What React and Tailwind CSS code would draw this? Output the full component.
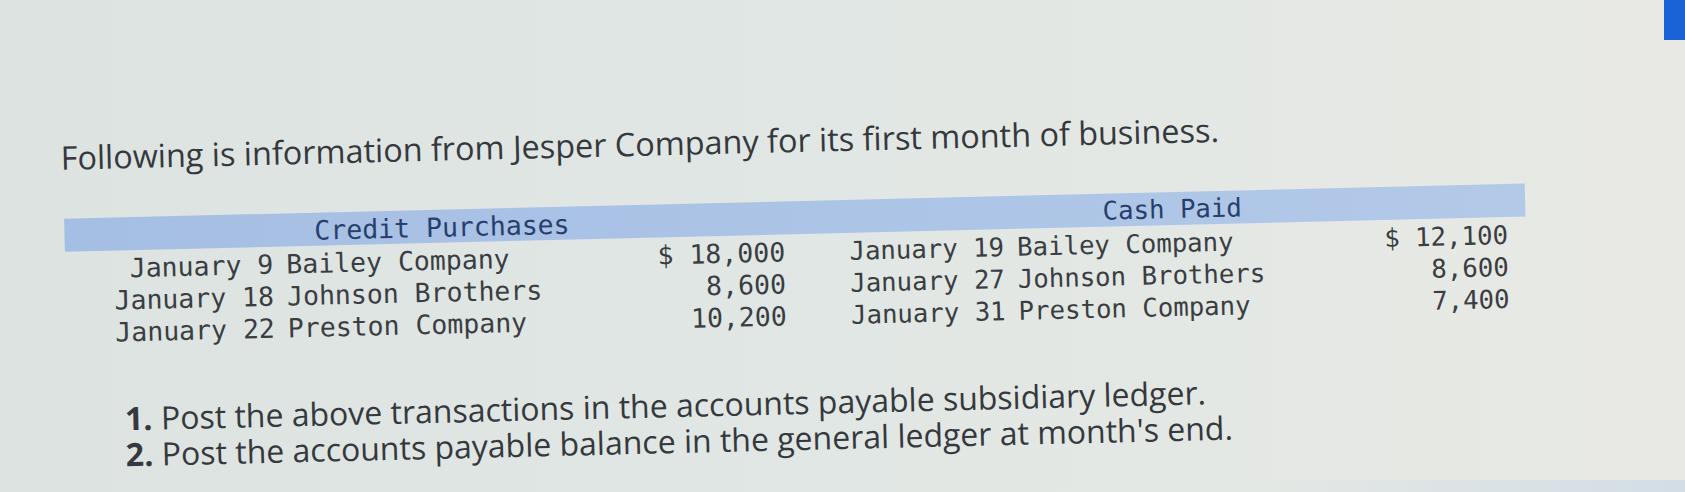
import React from 'react';

const purchases = [
  { date: 'January 9', name: 'Bailey Company', amount: '$ 18,000' },
  { date: 'January 18', name: 'Johnson Brothers', amount: '8,600' },
  { date: 'January 22', name: 'Preston Company', amount: '10,200' },
];

const payments = [
  { date: 'January 19', name: 'Bailey Company', amount: '$ 12,100' },
  { date: 'January 27', name: 'Johnson Brothers', amount: '8,600' },
  { date: 'January 31', name: 'Preston Company', amount: '7,400' },
];

const steps = [
  'Post the above transactions in the accounts payable subsidiary ledger.',
  "Post the accounts payable balance in the general ledger at month's end.",
];

function Row({ row, dateWidth }) {
  return (
    <div className="flex h-[32px] items-center leading-[28px]">
      <span className={`${dateWidth} text-right whitespace-pre`}>{row.date}</span>
      <span className="ml-[13px] flex-1 whitespace-pre">{row.name}</span>
      <span className="w-[130px] text-right whitespace-pre">{row.amount}</span>
    </div>
  );
}

export default function App() {
  return (
    <div className="relative h-[492px] w-full overflow-hidden bg-gradient-to-r from-[#dce3e0] via-[#e1e7e4] to-[#e8e9e4]">
      {/* blue tab at the top right edge */}
      <div className="absolute top-0 right-0 h-[40px] w-[21px] bg-[#1a63d6]" />
      {/* faint blue edge at the bottom right */}
      <div className="absolute right-0 bottom-0 h-[12px] w-[440px] bg-gradient-to-r from-transparent to-[#d2dde6]" />

      <div className="h-full w-full rotate-[-1.38deg] pt-[118px] pl-[63px] text-[#35383d]">
        {/* Heading */}
        <p className="text-[32.4px] leading-[40px] whitespace-nowrap" style={{ fontFamily: '"Open Sans", "Liberation Sans", sans-serif' }}>
          Following is information from Jesper Company for its first month of business.
        </p>

        {/* Table */}
        <div
          className="mt-[42px] ml-[2px] w-[1461px] text-[#3a3d42]"
          style={{ fontFamily: '"DejaVu Sans Mono", "Liberation Mono", monospace' }}
        >
          <div className="flex h-[33px] items-center bg-gradient-to-r from-[#a5bee3] to-[#b2c9e8] text-[#263f6c]">
            <div className="w-[755px] pt-[2px] text-center text-[26.5px] leading-[29px]">Credit Purchases</div>
            <div className="flex-1 pt-[2px] text-center text-[25.7px] leading-[29px]">Cash Paid</div>
          </div>
          <div className="flex pt-[2px]">
            <div className="w-[755px] pl-[42px] pr-[35px] text-[26.5px]">
              {purchases.map((r) => (
                <Row key={r.date} row={r} dateWidth="w-[166px]" />
              ))}
            </div>
            <div className="flex-1 pl-[29px] pr-[18px] text-[25.7px]">
              {payments.map((r) => (
                <Row key={r.date} row={r} dateWidth="w-[155px]" />
              ))}
            </div>
          </div>
        </div>

        {/* Instructions */}
        <ol className="mt-[52px] pl-[58px]" style={{ fontFamily: '"Open Sans", "Liberation Sans", sans-serif' }}>
          {steps.map((s, i) => (
            <li key={i} className="flex h-[36px] items-center text-[32px] whitespace-nowrap">
              <span className="w-[36px] font-bold leading-[32px]">{i + 1}.</span>
              <span className="leading-[32px]">{s}</span>
            </li>
          ))}
        </ol>
      </div>
    </div>
  );
}
